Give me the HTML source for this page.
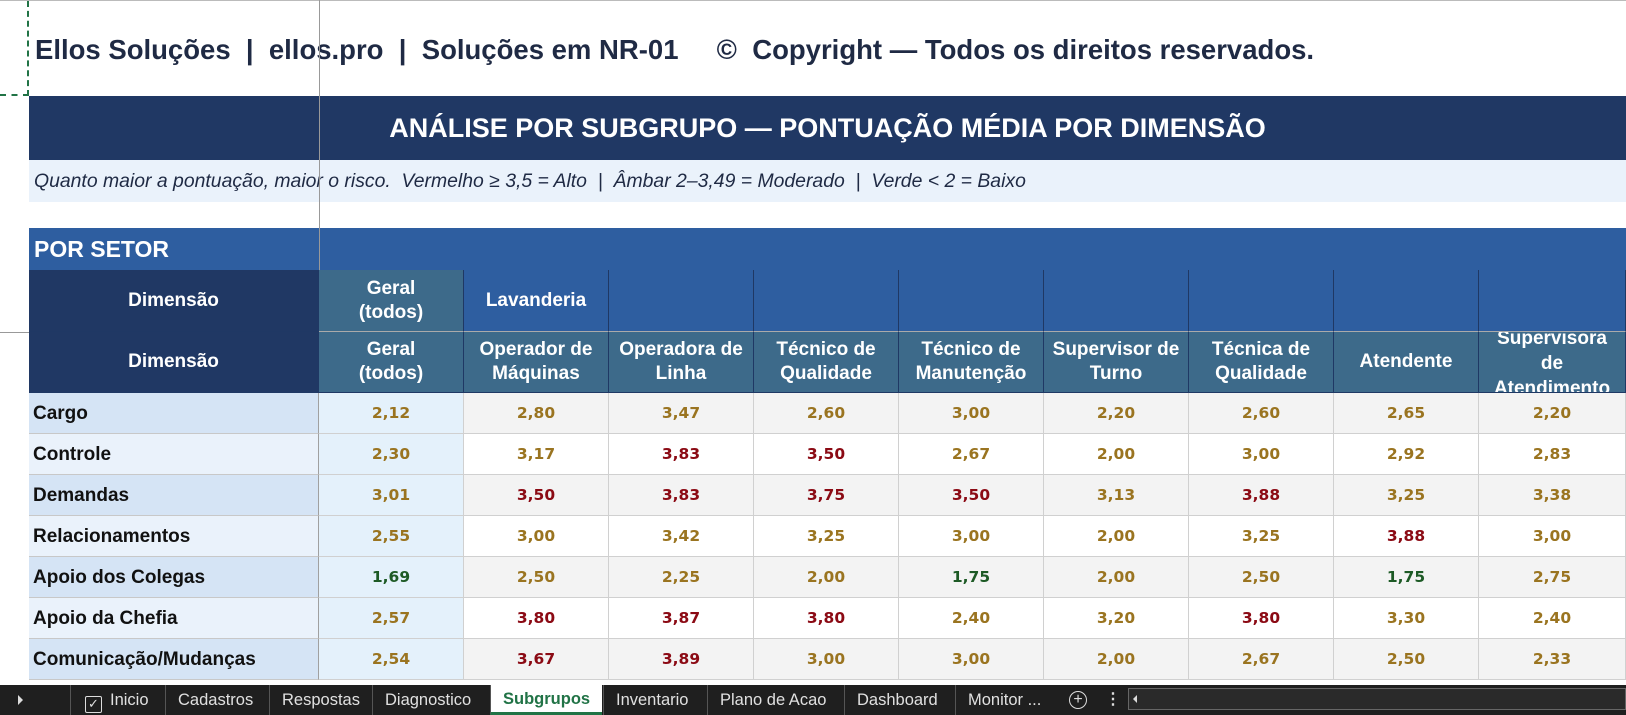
<!DOCTYPE html>
<html><head><meta charset="utf-8"><style>
*{margin:0;padding:0;box-sizing:border-box}
body{width:1626px;height:715px;overflow:hidden;background:#fff;font-family:"Liberation Sans",Arial,sans-serif;position:relative}
.a{position:absolute}
.c{position:absolute;display:flex;align-items:center;justify-content:center;text-align:center;overflow:hidden}
.h{color:#fff;font-weight:bold;font-size:19px;line-height:24px;border-right:1px solid #1f3864;border-bottom:1px solid #1f3864}
.n{font-family:"DejaVu Sans",sans-serif;font-weight:bold;font-size:15.5px;border-right:1px solid #d0d0d0;border-bottom:1px solid #d0d0d0}
.l{position:absolute;display:flex;align-items:center;padding-left:4px;padding-top:2px;font-weight:bold;font-size:19px;color:#111;border-bottom:1px solid #c8c8c8;border-right:1px solid #a0a0a0}
.A{color:#9a7420}.R{color:#8b0a14}.G{color:#1d5a25}
.tab{position:absolute;top:0;height:30px;line-height:30px;color:#e0e0e0;font-size:16.5px;border-left:1px solid #555;padding:0 12px}
</style></head><body>
<div class="a" style="left:0;top:1px;width:29px;height:95px;border:2px dashed #217346;border-left:none;border-top:none"></div>
<div class="a" style="left:0;top:0;width:1626px;height:1px;background:#bbb"></div>
<div class="a" style="left:35px;top:34px;font-size:27.5px;font-weight:bold;color:#1f2a44;white-space:pre">Ellos Soluções  |  ellos.pro  |  Soluções em NR-01     ©  Copyright — Todos os direitos reservados.</div>
<div class="c" style="left:29px;top:96px;width:1597px;height:64px;background:#203864;color:#fff;font-weight:bold;font-size:27px">ANÁLISE POR SUBGRUPO — PONTUAÇÃO MÉDIA POR DIMENSÃO</div>
<div class="a" style="left:29px;top:160px;width:1597px;height:42px;background:#eaf2fb;color:#1f2a44;font-style:italic;font-size:19.4px;line-height:42px;padding-left:5px;white-space:pre">Quanto maior a pontuação, maior o risco.  Vermelho ≥ 3,5 = Alto  |  Âmbar 2–3,49 = Moderado  |  Verde &lt; 2 = Baixo</div>
<div class="a" style="left:29px;top:228px;width:1597px;height:42px;background:#2e5ea0;color:#fff;font-weight:bold;font-size:23px;line-height:42px;padding-left:5px">POR SETOR</div>
<div class="a" style="left:319px;top:0;width:1px;height:332px;background:#999"></div>
<div class="a" style="left:0;top:332px;width:29px;height:1px;background:#999"></div>
<div id="t"></div>
<div class="a" style="left:0;top:685px;width:1626px;height:30px;background:#1f1f1f">
<div class="a" style="left:18px;top:10px;width:0;height:0;border-left:5px solid #ddd;border-top:5px solid transparent;border-bottom:5px solid transparent"></div>
<div class="tab" style="left:70px;padding-left:14px"><span style="display:inline-block;width:17px;height:17px;border:1.5px solid #ddd;border-radius:2px;vertical-align:-3px;margin-right:8px;font-size:13px;line-height:14px;text-align:center">✓</span>Inicio</div>
<div class="tab" style="left:165px">Cadastros</div>
<div class="tab" style="left:269px">Respostas</div>
<div class="tab" style="left:372px">Diagnostico</div>
<div class="tab" style="left:490px;background:#fff;color:#217346;font-weight:bold;border-bottom:3px solid #217346;height:30px;line-height:28px;width:112px">Subgrupos</div>
<div class="tab" style="left:603px">Inventario</div>
<div class="tab" style="left:707px">Plano de Acao</div>
<div class="tab" style="left:844px">Dashboard</div>
<div class="tab" style="left:955px">Monitor ...</div>
<div class="a" style="left:1069px;top:6px;width:18px;height:18px;border:1.5px solid #ddd;border-radius:50%;color:#ddd;font-size:16px;line-height:15px;text-align:center">+</div>
<div class="a" style="left:1105px;top:4px;color:#ddd;font-size:16px;font-weight:bold">⋮</div>
<div class="a" style="left:1128px;top:3px;width:498px;height:22px;border:1px solid #666;background:#2a2a2a"></div>
<div class="a" style="left:1133px;top:10px;width:0;height:0;border-right:4px solid #ddd;border-top:4px solid transparent;border-bottom:4px solid transparent"></div>
</div>
<script>
var X=[319,464,609,754,899,1044,1189,1334,1479,1626];
var h2=["Geral<br>(todos)","Operador de<br>Máquinas","Operadora de<br>Linha","Técnico de<br>Qualidade","Técnico de<br>Manutenção","Supervisor de<br>Turno","Técnica de<br>Qualidade","Atendente","Supervisora<br>de<br>Atendimento"];
var rows=[["Cargo","2,12A 2,80A 3,47A 2,60A 3,00A 2,20A 2,60A 2,65A 2,20A"],
["Controle","2,30A 3,17A 3,83R 3,50R 2,67A 2,00A 3,00A 2,92A 2,83A"],
["Demandas","3,01A 3,50R 3,83R 3,75R 3,50R 3,13A 3,88R 3,25A 3,38A"],
["Relacionamentos","2,55A 3,00A 3,42A 3,25A 3,00A 2,00A 3,25A 3,88R 3,00A"],
["Apoio dos Colegas","1,69G 2,50A 2,25A 2,00A 1,75G 2,00A 2,50A 1,75G 2,75A"],
["Apoio da Chefia","2,57A 3,80R 3,87R 3,80R 2,40A 3,20A 3,80R 3,30A 2,40A"],
["Comunicação/Mudanças","2,54A 3,67R 3,89R 3,00A 3,00A 2,00A 2,67A 2,50A 2,33A"]];
var s="";
s+='<div class="c h" style="left:29px;top:270px;width:290px;height:62px;background:#203864">Dimensão</div>';
s+='<div class="c h" style="left:29px;top:332px;width:290px;height:61px;background:#203864">Dimensão</div>';
for(var i=0;i<9;i++){var w=X[i+1]-X[i];
 var bg=i==0?"#3d6a8a":"#2e5ea0";
 var t=i==0?"Geral<br>(todos)":(i==1?"Lavanderia":"");
 s+='<div class="c h" style="left:'+X[i]+'px;top:270px;width:'+w+'px;height:62px;background:'+bg+';border-bottom-color:#aaa">'+t+'</div>';
 s+='<div class="c h" style="left:'+X[i]+'px;top:332px;width:'+w+'px;height:61px;background:#3d6a8a;'+(i==8?'line-height:25px;padding-top:2px':'')+'">'+h2[i]+'</div>';}
for(var r=0;r<7;r++){var y=393+r*41;
 s+='<div class="l" style="left:29px;top:'+y+'px;width:290px;height:41px;background:'+(r%2?"#eaf2fb":"#d5e4f5")+'">'+rows[r][0]+'</div>';
 var v=rows[r][1].split(" ");
 for(var i=0;i<9;i++){var w=X[i+1]-X[i];var bg=i==0?"#e4f1fb":(r%2?"#fff":"#f3f3f3");
  s+='<div class="c n '+v[i].slice(-1)+'" style="left:'+X[i]+'px;top:'+y+'px;width:'+w+'px;height:41px;background:'+bg+'">'+v[i].slice(0,-1)+'</div>';}}
document.getElementById("t").innerHTML=s;
</script>
</body></html>
